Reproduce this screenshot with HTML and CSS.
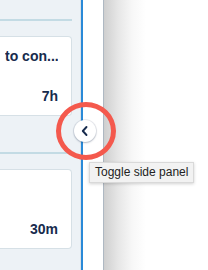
FILE: index.html
```html
<!DOCTYPE html>
<html>
<head>
<meta charset="utf-8">
<link rel="stylesheet" href="styles.css">
</head>
<body>
<div class="app">
  <aside class="panel">
    <div class="divider first"></div>
    <div class="card one">
      <div class="title">to con...</div>
      <div class="time">7h</div>
    </div>
    <div class="divider second"></div>
    <div class="card two">
      <div class="title"></div>
      <div class="time">30m</div>
    </div>
  </aside>
  <div class="edge"></div>
  <div class="gap"></div>
  <main class="main"></main>

  <div class="ring"></div>
  <button class="toggle" aria-label="Toggle side panel">
    <svg width="12" height="12" viewBox="0 0 12 12"><path d="M7.5 2 L3.8 6 L7.5 10" fill="none" stroke="#172b4d" stroke-width="1.9" stroke-linecap="round" stroke-linejoin="round"/></svg>
  </button>
  <div class="tip">Toggle side panel</div>
</div>
</body>
</html>
```
FILE: styles.css
```css
* { box-sizing: border-box; }
html, body { margin: 0; padding: 0; background: #fff; }
.app {
  position: relative;
  display: flex;
  width: 208px;
  height: 270px;
  overflow: hidden;
  font-family: "Liberation Sans", Arial, sans-serif;
}
.panel {
  width: 81px;
  flex: none;
  background: #edf2f6;
  border-right: 1px solid #dbe2e8;
  padding-right: 8px;
  display: flex;
  flex-direction: column;
}
.divider {
  height: 2px;
  background: #c3dbe4;
}
.divider.first { margin-top: 19px; }
.divider.second { margin-top: 36px; }
.card {
  height: 80px;
  background: #fff;
  border: 1px solid #d6e0e6;
  border-left: none;
  border-radius: 0 4px 4px 0;
  display: flex;
  flex-direction: column;
  justify-content: space-between;
  padding: 11px 13px 11px 5px;
  color: #172b4d;
  font-weight: bold;
  font-size: 14px;
  line-height: 16px;
}
.card.one { margin-top: 15px; }
.card.two { margin-top: 15px; }
.title { white-space: nowrap; overflow: hidden; min-height: 16px; }
.time { text-align: right; }
.edge {
  width: 2px;
  flex: none;
  background: #2a8ad8;
}
.gap {
  width: 20px;
  flex: none;
  background: #fff;
}
.main {
  flex: 1;
  border-left: 1px solid #aeb8c2;
  background: linear-gradient(to right, #cfcfcf 0px, #e6e6e6 14px, #f7f7f7 28px, #ffffff 42px);
}
.ring {
  position: absolute;
  left: 56px;
  top: 102px;
  width: 60px;
  height: 58px;
  border: 5px solid #f4594d;
  border-radius: 50%;
}
.toggle {
  position: absolute;
  left: 74px;
  top: 120px;
  width: 22px;
  height: 22px;
  padding: 0;
  border: none;
  border-radius: 50%;
  background: #fff;
  box-shadow: 0 0 0 1px rgba(9,30,66,0.08), 0 1px 2px rgba(9,30,66,0.25);
  display: flex;
  align-items: center;
  justify-content: center;
}
.toggle svg { display: block; }
.tip {
  position: absolute;
  left: 89px;
  top: 162px;
  width: 105px;
  height: 21px;
  background: #f2f2f2;
  border: 1px solid #d9d9d9;
  box-shadow: 0 1px 3px rgba(0,0,0,0.18);
  font-size: 12px;
  line-height: 19px;
  color: #222;
  padding-left: 5px;
  white-space: nowrap;
}
```
